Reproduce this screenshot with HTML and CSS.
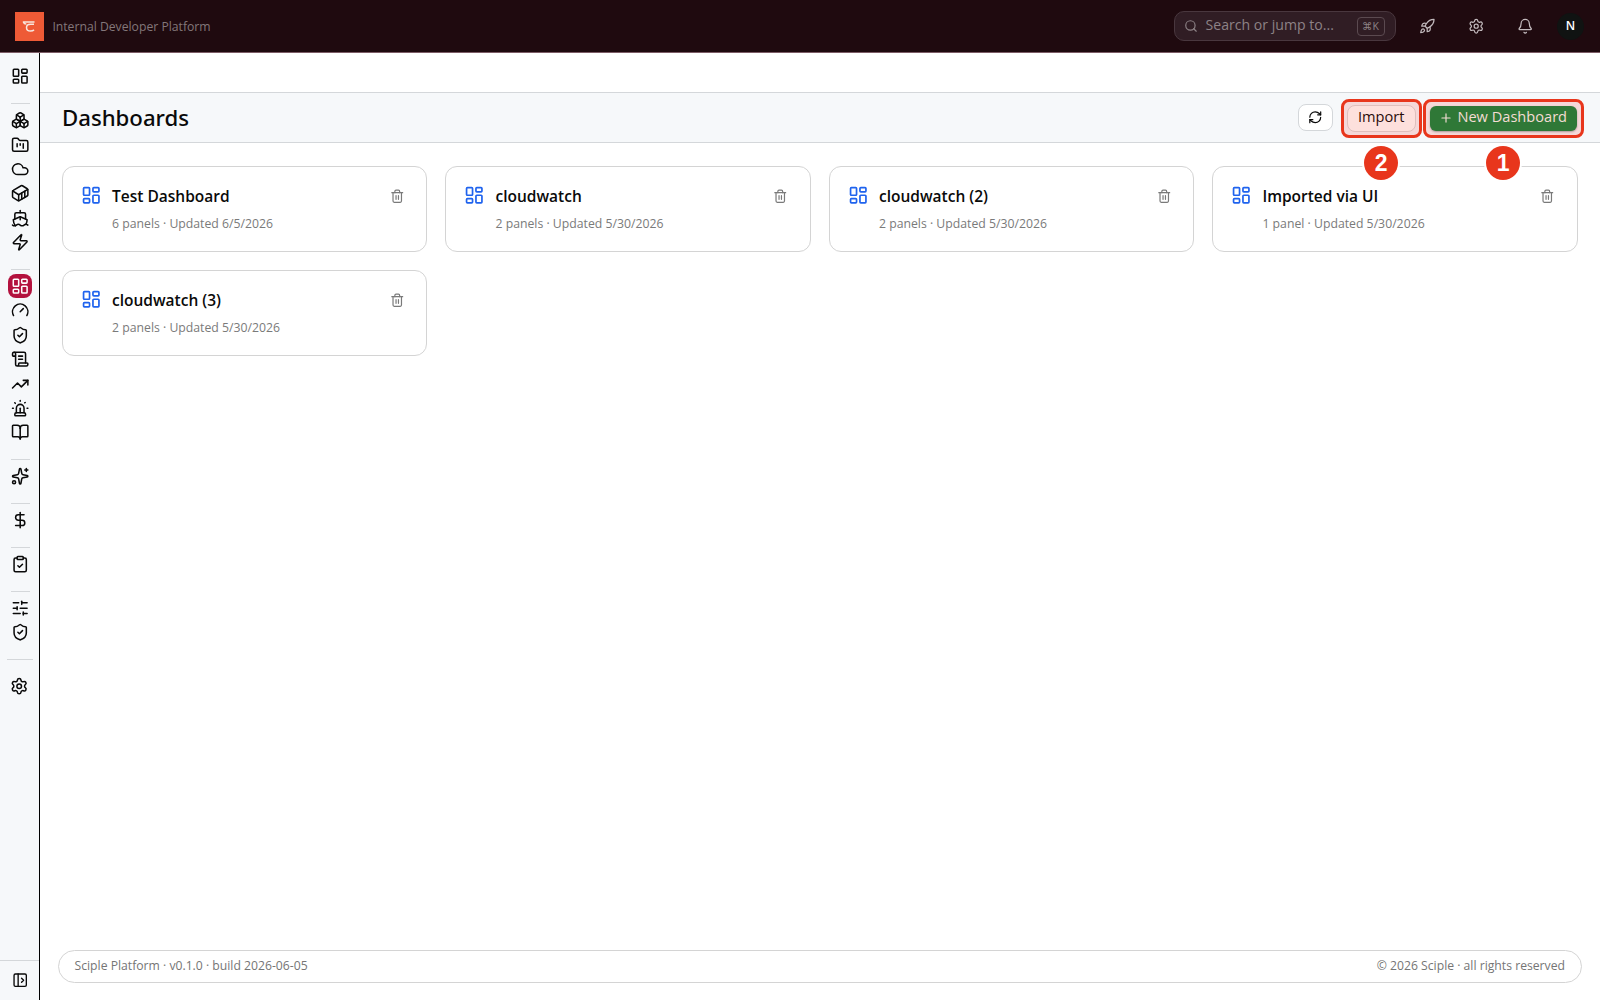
FILE: index.html
```html
<!DOCTYPE html>
<html lang="en">
<head>
  <meta charset="UTF-8" />
  <meta name="viewport" content="width=device-width, initial-scale=1.0"/>
  <title>Dashboards</title>
  <link rel="stylesheet" href="styles.css">
</head>
<body>
  <svg class="sprite" aria-hidden="true">
    <symbol id="dashboard" viewBox="0 0 24 24"><rect x="3" y="3" width="7" height="9" rx="1"/><rect x="14" y="3" width="7" height="5" rx="1"/><rect x="14" y="12" width="7" height="9" rx="1"/><rect x="3" y="16" width="7" height="5" rx="1"/></symbol>
    <symbol id="boxes" viewBox="0 0 24 24"><path d="M2.97 12.92A2 2 0 0 0 2 14.63v3.24a2 2 0 0 0 .97 1.71l3 1.8a2 2 0 0 0 2.06 0L12 19v-5.5l-5-3-4.03 2.42Z"/><path d="m7 16.5-4.74-2.85"/><path d="m7 16.5 5-3"/><path d="M7 16.5v5.17"/><path d="M12 13.5V19l3.97 2.38a2 2 0 0 0 2.06 0l3-1.8a2 2 0 0 0 .97-1.71v-3.24a2 2 0 0 0-.97-1.71L17 10.5l-5 3Z"/><path d="m17 16.5-5-3"/><path d="m17 16.5 4.74-2.85"/><path d="M17 16.5v5.17"/><path d="M7.97 4.42A2 2 0 0 0 7 6.13v4.37l5 3 5-3V6.13a2 2 0 0 0-.97-1.71l-3-1.8a2 2 0 0 0-2.06 0l-3 1.8Z"/><path d="M12 8 7.26 5.15"/><path d="m12 8 4.74-2.85"/><path d="M12 13.5V8"/></symbol>
    <symbol id="folder" viewBox="0 0 24 24"><path d="M4 20h16a2 2 0 0 0 2-2V8a2 2 0 0 0-2-2h-7.93a2 2 0 0 1-1.66-.9l-.82-1.2A2 2 0 0 0 7.93 3H4a2 2 0 0 0-2 2v13c0 1.1.9 2 2 2Z"/><path d="M8 10v4"/><path d="M12 10v2"/><path d="M16 10v6"/></symbol>
    <symbol id="cloud" viewBox="0 0 24 24"><path d="M17.5 19H9a7 7 0 1 1 6.71-9h1.79a4.5 4.5 0 1 1 0 9Z"/></symbol>
    <symbol id="container" viewBox="0 0 24 24"><path d="M22 7.7c0-.6-.4-1.2-.8-1.5l-6.3-3.9a1.72 1.72 0 0 0-1.7 0l-10.3 6c-.5.2-.9.8-.9 1.4v6.6c0 .5.4 1.2.8 1.5l6.3 3.9a1.72 1.72 0 0 0 1.7 0l10.3-6c.5-.3.9-1 .9-1.5Z"/><path d="M10 21.9V14L2.1 9.1"/><path d="m10 14 11.9-6.9"/><path d="M14 19.8v-8.1"/><path d="M18 17.5V9.4"/></symbol>
    <symbol id="ship" viewBox="0 0 24 24"><path d="M12 10.189V14"/><path d="M12 2v3"/><path d="M19 13V7a2 2 0 0 0-2-2H7a2 2 0 0 0-2 2v6"/><path d="M19.38 20A11.6 11.6 0 0 0 21 14l-8.188-3.639a2 2 0 0 0-1.624 0L3 14a11.6 11.6 0 0 0 2.81 7.76"/><path d="M2 21c.6.5 1.2 1 2.5 1 2.5 0 2.5-2 5-2 1.3 0 1.9.5 2.5 1s1.2 1 2.5 1c2.5 0 2.5-2 5-2 1.3 0 1.9.5 2.5 1"/></symbol>
    <symbol id="zap" viewBox="0 0 24 24"><path d="M4 14a1 1 0 0 1-.78-1.63l9.9-10.2a.5.5 0 0 1 .86.46l-1.92 6.02A1 1 0 0 0 13 10h7a1 1 0 0 1 .78 1.63l-9.9 10.2a.5.5 0 0 1-.86-.46l1.92-6.02A1 1 0 0 0 11 14z"/></symbol>
    <symbol id="gauge" viewBox="0 0 24 24"><path d="m12 14 4-4"/><path d="M3.34 19a10 10 0 1 1 17.32 0"/></symbol>
    <symbol id="shield" viewBox="0 0 24 24"><path d="M20 13c0 5-3.5 7.5-7.66 8.95a1 1 0 0 1-.67-.01C7.5 20.5 4 18 4 13V6a1 1 0 0 1 1-1c2 0 4.5-1.2 6.24-2.72a1.17 1.17 0 0 1 1.52 0C14.51 3.81 17 5 19 5a1 1 0 0 1 1 1z"/><path d="m9 12 2 2 4-4"/></symbol>
    <symbol id="scroll" viewBox="0 0 24 24"><path d="M15 12h-5"/><path d="M15 8h-5"/><path d="M19 17V5a2 2 0 0 0-2-2H4"/><path d="M8 21h12a2 2 0 0 0 2-2v-1a1 1 0 0 0-1-1H11a1 1 0 0 0-1 1v1a2 2 0 1 1-4 0V5a2 2 0 1 0-4 0v2a1 1 0 0 0 1 1h3"/></symbol>
    <symbol id="trending" viewBox="0 0 24 24"><path d="M16 7h6v6"/><path d="m22 7-8.5 8.5-5-5L2 17"/></symbol>
    <symbol id="siren" viewBox="0 0 24 24"><path d="M7 18v-6a5 5 0 1 1 10 0v6"/><path d="M5 21a1 1 0 0 0 1 1h12a1 1 0 0 0 1-1v-1a2 2 0 0 0-2-2H7a2 2 0 0 0-2 2z"/><path d="M21 12h1"/><path d="M18.5 4.5 18 5"/><path d="M2 12h1"/><path d="M12 2v1"/><path d="m4.929 4.929.707.707"/><path d="M12 12v6"/></symbol>
    <symbol id="book" viewBox="0 0 24 24"><path d="M12 7v14"/><path d="M3 18a1 1 0 0 1-1-1V4a1 1 0 0 1 1-1h5a4 4 0 0 1 4 4 4 4 0 0 1 4-4h5a1 1 0 0 1 1 1v13a1 1 0 0 1-1 1h-6a3 3 0 0 0-3 3 3 3 0 0 0-3-3z"/></symbol>
    <symbol id="sparkles" viewBox="0 0 24 24"><path d="M11.017 2.814a1 1 0 0 1 1.966 0l1.051 5.558a2 2 0 0 0 1.594 1.594l5.558 1.051a1 1 0 0 1 0 1.966l-5.558 1.051a2 2 0 0 0-1.594 1.594l-1.051 5.558a1 1 0 0 1-1.966 0l-1.051-5.558a2 2 0 0 0-1.594-1.594l-5.558-1.051a1 1 0 0 1 0-1.966l5.558-1.051a2 2 0 0 0 1.594-1.594z"/><path d="M20 2v4"/><path d="M22 4h-4"/><circle cx="4" cy="20" r="2"/></symbol>
    <symbol id="dollar" viewBox="0 0 24 24"><path d="M12 2v20"/><path d="M17 5H9.5a3.5 3.5 0 0 0 0 7h5a3.5 3.5 0 0 1 0 7H6"/></symbol>
    <symbol id="clipboard" viewBox="0 0 24 24"><rect x="8" y="2" width="8" height="4" rx="1"/><path d="M16 4h2a2 2 0 0 1 2 2v14a2 2 0 0 1-2 2H6a2 2 0 0 1-2-2V6a2 2 0 0 1 2-2h2"/><path d="m9 14 2 2 4-4"/></symbol>
    <symbol id="sliders" viewBox="0 0 24 24"><path d="M10 5H3"/><path d="M12 19H3"/><path d="M14 3v4"/><path d="M16 17v4"/><path d="M21 12h-9"/><path d="M21 19h-5"/><path d="M21 5h-7"/><path d="M8 10v4"/><path d="M8 12H3"/></symbol>
    <symbol id="settings" viewBox="0 0 24 24"><path d="M9.671 4.136a2.34 2.34 0 0 1 4.659 0 2.34 2.34 0 0 0 3.319 1.915 2.34 2.34 0 0 1 2.33 4.033 2.34 2.34 0 0 0 0 3.831 2.34 2.34 0 0 1-2.33 4.033 2.34 2.34 0 0 0-3.319 1.915 2.34 2.34 0 0 1-4.659 0 2.34 2.34 0 0 0-3.32-1.915 2.34 2.34 0 0 1-2.33-4.033 2.34 2.34 0 0 0 0-3.831A2.34 2.34 0 0 1 6.35 6.051a2.34 2.34 0 0 0 3.319-1.915"/><circle cx="12" cy="12" r="3"/></symbol>
    <symbol id="panel" viewBox="0 0 24 24"><rect x="3" y="3" width="18" height="18" rx="2"/><path d="M9 3v18"/><path d="m14 9 3 3-3 3"/></symbol>
    <symbol id="rocket" viewBox="0 0 24 24"><path d="M4.5 16.5c-1.5 1.26-2 5-2 5s3.74-.5 5-2c.71-.84.7-2.13-.09-2.91a2.18 2.18 0 0 0-2.91-.09z"/><path d="m12 15-3-3a22 22 0 0 1 2-3.95A12.88 12.88 0 0 1 22 2c0 2.72-.78 7.5-6 11a22.35 22.35 0 0 1-4 2z"/><path d="M9 12H4s.55-3.03 2-4c1.62-1.08 5 0 5 0"/><path d="M12 15v5s3.03-.55 4-2c1.08-1.62 0-5 0-5"/></symbol>
    <symbol id="bell" viewBox="0 0 24 24"><path d="M10.268 21a2 2 0 0 0 3.464 0"/><path d="M3.262 15.326A1 1 0 0 0 4 17h16a1 1 0 0 0 .74-1.673C19.41 13.956 18 12.499 18 8A6 6 0 0 0 6 8c0 4.499-1.411 5.956-2.738 7.326"/></symbol>
    <symbol id="search" viewBox="0 0 24 24"><path d="m21 21-4.34-4.34"/><circle cx="11" cy="11" r="8"/></symbol>
    <symbol id="refresh" viewBox="0 0 24 24"><path d="M3 12a9 9 0 0 1 9-9 9.75 9.75 0 0 1 6.74 2.74L21 8"/><path d="M21 3v5h-5"/><path d="M21 12a9 9 0 0 1-9 9 9.75 9.75 0 0 1-6.74-2.74L3 16"/><path d="M8 16H3v5"/></symbol>
    <symbol id="trash" viewBox="0 0 24 24"><path d="M10 11v6"/><path d="M14 11v6"/><path d="M19 6v14a2 2 0 0 1-2 2H7a2 2 0 0 1-2-2V6"/><path d="M3 6h18"/><path d="M8 6V4a2 2 0 0 1 2-2h4a2 2 0 0 1 2 2v2"/></symbol>
    <symbol id="plus" viewBox="0 0 24 24"><path d="M5 12h14"/><path d="M12 5v14"/></symbol>
  </svg>

  <header class="topbar">
    <div class="logo">
      <svg viewBox="0 0 29 29"><path d="M7.800 9.900h11.700M8.500 10.200c.4 1.500 1.500 1.900 2.800 1.900M19 12.300h-3.500c-2.500 0-4 1-4 3.200 0 2.400 1.500 3.600 4 3.600 1.500 0 2.700-.4 3.500-1.200"/></svg>
    </div>
    <span class="brand">Internal Developer Platform</span>
    <div class="search">
      <svg class="icon"><use href="#search"/></svg>
      <span class="search-text">Search or jump to...</span>
      <kbd>⌘K</kbd>
    </div>
    <nav class="top-actions">
      <a><svg class="icon"><use href="#rocket"/></svg></a>
      <a><svg class="icon"><use href="#settings"/></svg></a>
      <a><svg class="icon"><use href="#bell"/></svg></a>
    </nav>
    <div class="avatar">N</div>
  </header>

  <div class="layout">
    <aside class="sidebar">
      <nav class="side-nav">
        <a><svg class="icon"><use href="#dashboard"/></svg></a>
        <hr>
        <a><svg class="icon"><use href="#boxes"/></svg></a>
        <a><svg class="icon"><use href="#folder"/></svg></a>
        <a><svg class="icon"><use href="#cloud"/></svg></a>
        <a><svg class="icon"><use href="#container"/></svg></a>
        <a><svg class="icon"><use href="#ship"/></svg></a>
        <a><svg class="icon"><use href="#zap"/></svg></a>
        <hr>
        <a class="active"><svg class="icon"><use href="#dashboard"/></svg></a>
        <a><svg class="icon"><use href="#gauge"/></svg></a>
        <a><svg class="icon"><use href="#shield"/></svg></a>
        <a><svg class="icon"><use href="#scroll"/></svg></a>
        <a><svg class="icon"><use href="#trending"/></svg></a>
        <a><svg class="icon"><use href="#siren"/></svg></a>
        <a><svg class="icon"><use href="#book"/></svg></a>
        <hr>
        <a><svg class="icon"><use href="#sparkles"/></svg></a>
        <hr>
        <a><svg class="icon"><use href="#dollar"/></svg></a>
        <hr>
        <a><svg class="icon"><use href="#clipboard"/></svg></a>
        <hr>
        <a><svg class="icon"><use href="#sliders"/></svg></a>
        <a><svg class="icon"><use href="#shield"/></svg></a>
      </nav>
      <div class="side-settings"><svg class="icon"><use href="#settings"/></svg></div>
      <div class="side-toggle"><svg class="icon"><use href="#panel"/></svg></div>
    </aside>

    <main class="content">
      <div class="page-header">
        <h1>Dashboards</h1>
        <button class="btn btn-refresh"><svg class="icon"><use href="#refresh"/></svg></button>
        <div class="callout callout-import">
          <button class="btn btn-import">Import</button>
          <span class="step">2</span>
        </div>
        <div class="callout callout-new">
          <button class="btn btn-new"><svg class="icon"><use href="#plus"/></svg>New Dashboard</button>
          <span class="step">1</span>
        </div>
      </div>

      <div class="cards">
        <div class="card">
          <svg class="icon"><use href="#dashboard"/></svg>
          <div class="text">
            <h2>Test Dashboard</h2>
            <p>6 panels · Updated 6/5/2026</p>
          </div>
          <svg class="icon trash"><use href="#trash"/></svg>
        </div>
        <div class="card">
          <svg class="icon"><use href="#dashboard"/></svg>
          <div class="text">
            <h2>cloudwatch</h2>
            <p>2 panels · Updated 5/30/2026</p>
          </div>
          <svg class="icon trash"><use href="#trash"/></svg>
        </div>
        <div class="card">
          <svg class="icon"><use href="#dashboard"/></svg>
          <div class="text">
            <h2>cloudwatch (2)</h2>
            <p>2 panels · Updated 5/30/2026</p>
          </div>
          <svg class="icon trash"><use href="#trash"/></svg>
        </div>
        <div class="card">
          <svg class="icon"><use href="#dashboard"/></svg>
          <div class="text">
            <h2>Imported via UI</h2>
            <p>1 panel · Updated 5/30/2026</p>
          </div>
          <svg class="icon trash"><use href="#trash"/></svg>
        </div>
        <div class="card">
          <svg class="icon"><use href="#dashboard"/></svg>
          <div class="text">
            <h2>cloudwatch (3)</h2>
            <p>2 panels · Updated 5/30/2026</p>
          </div>
          <svg class="icon trash"><use href="#trash"/></svg>
        </div>
      </div>

      <footer class="footer">
        <span>Sciple Platform · v0.1.0 · build 2026-06-05</span>
        <span>© 2026 Sciple · all rights reserved</span>
      </footer>
    </main>
  </div>
</body>
</html>
```
FILE: styles.css
```css
* {
  box-sizing: border-box;
}
body {
  margin: 0;
  height: 100vh;
  display: flex;
  flex-direction: column;
  overflow: hidden;
  font-family: "Open Sans", "Noto Sans", sans-serif;
  color: #0a0a0a;
  background: #fff;
}
.sprite {
  display: none;
}
.icon {
  width: 18.4px;
  height: 18.4px;
  flex: none;
  fill: none;
  stroke: currentColor;
  stroke-width: 2;
  stroke-linecap: round;
  stroke-linejoin: round;
}

/* top bar */
.topbar {
  height: 53px;
  flex: none;
  display: flex;
  align-items: center;
  padding: 0 16px 0 15.4px;
  background: #1f0a0f;
  border-bottom: 1px solid #7d5d67;
}
.logo {
  width: 29px;
  height: 29px;
  background: #ee5a36;
}
.logo svg {
  display: block;
  fill: none;
  stroke: #f7e6de;
  stroke-width: 1.5;
}
.brand {
  margin-left: 8px;
  font-size: 12.2px;
  color: #83777a;
}
.search {
  margin-left: auto;
  width: 222.5px;
  height: 30px;
  display: flex;
  align-items: center;
  padding: 0 10.5px 0 9px;
  border: 1px solid #49373e;
  border-radius: 10px;
  background: #301d24;
  color: #8d8286;
}
.search .icon {
  width: 14px;
  height: 14px;
}
.search-text {
  flex: 1;
  margin-left: 8px;
  padding-bottom: 3px;
  font-size: 14.1px;
}
.search kbd {
  width: 28px;
  height: 19px;
  border: 1px solid #5b4a50;
  border-radius: 4px;
  font-family: "Open Sans", "DejaVu Sans", sans-serif;
  font-size: 10.5px;
  line-height: 17px;
  text-align: center;
}
.top-actions {
  display: flex;
  color: #c2babd;
  margin: 0 7px 0 7px;
}
.top-actions a {
  width: 49px;
  display: flex;
  justify-content: center;
}
.top-actions .icon {
  width: 16.4px;
  height: 16.4px;
  stroke-width: 1.8;
}
.avatar {
  width: 27px;
  height: 27px;
  border-radius: 50%;
  background: #101312;
  color: #fff;
  font-size: 12px;
  font-weight: 600;
  line-height: 26px;
  text-align: center;
}

.layout {
  flex: 1;
  display: flex;
  min-height: 0;
}

/* sidebar */
.sidebar {
  width: 40px;
  flex: none;
  display: flex;
  flex-direction: column;
  background: #f6f8fa;
  border-right: 1px solid #000;
}
.side-nav {
  display: flex;
  flex-direction: column;
  align-items: center;
  padding: 11.3px 0 14.5px;
  border-bottom: 1px solid #d4d7da;
  margin: 0 6px 0 7px;
}
.side-nav a {
  width: 23.5px;
  height: 24.4px;
  display: flex;
  align-items: center;
  justify-content: center;
}
.side-nav .active {
  border-radius: 8px;
  background: #b3123e;
  color: #fff;
}
.side-nav hr {
  width: 19px;
  height: 1px;
  margin: 14.5px 0 4px;
  border: 0;
  background: #d4d7da;
}
.side-settings {
  display: flex;
  justify-content: center;
  padding-top: 16.5px;
}
.side-toggle {
  margin-top: auto;
  height: 40px;
  padding-left: 1px;
  display: flex;
  align-items: center;
  justify-content: center;
  border-top: 1px solid #d4d7da;
}
.side-toggle .icon {
  width: 16.4px;
  height: 16.4px;
}

/* page */
.content {
  flex: 1;
  display: flex;
  flex-direction: column;
  padding-top: 39px;
}
.page-header {
  height: 51px;
  display: flex;
  align-items: center;
  padding: 0 16.5px 0 22px;
  background: #f6f8fa;
  border-top: 1px solid #d4d7da;
  border-bottom: 1px solid #d4d7da;
}
.page-header h1 {
  margin: 0 auto 0 0;
  padding-bottom: 1px;
  font-family: "Noto Sans", sans-serif;
  font-size: 22.2px;
  font-weight: 500;
}
.btn {
  display: flex;
  align-items: center;
  justify-content: center;
  padding: 0 0 4px;
  font-family: inherit;
  font-size: 14.6px;
  border: 1px solid #d4d7da;
  border-radius: 8px;
  background: #fff;
  color: #0a0a0a;
}
.btn-refresh {
  width: 35px;
  height: 27px;
  padding: 0;
  margin-right: 8px;
}
.btn-refresh .icon {
  width: 14.5px;
  height: 14.5px;
}
.btn-import {
  width: 69px;
  height: 27px;
  background: #fde0dc;
  border-color: #dfbfbc;
  color: #2a0d0a;
}
.btn-new {
  width: 147px;
  height: 25px;
  gap: 4px;
  border: 0;
  border-radius: 6px;
  background: #2f7837;
  color: #f4dcd4;
  box-shadow: 0 1px 2px rgba(0,0,0,0.3);
}
.btn-new .icon {
  width: 14px;
  height: 14px;
  margin-top: 3px;
}

/* numbered callouts */
.callout {
  position: relative;
  height: 39px;
  display: flex;
  align-items: center;
  justify-content: center;
  margin-top: 1px;
  border: 3px solid #e8361c;
  border-radius: 8px;
  background: #f5d8d8;
}
.callout-import {
  width: 80.5px;
  margin-right: 1.5px;
}
.callout-new {
  width: 160.5px;
}
.step {
  position: absolute;
  top: 44px;
  left: 50%;
  width: 34px;
  height: 34px;
  margin-left: -17px;
  border-radius: 50%;
  background: #e8361c;
  box-shadow: 0 0 0 2px #fff;
  color: #fff;
  font-family: "Liberation Sans", Arial, sans-serif;
  font-size: 23px;
  font-weight: bold;
  line-height: 34px;
  text-align: center;
}

.cards {
  display: grid;
  grid-template-columns: repeat(4, 1fr);
  gap: 18.3px;
  padding: 23px 22.4px 0 22px;
}
.card {
  height: 86px;
  display: flex;
  align-items: flex-start;
  padding: 18px 22px 0 18px;
  border: 1px solid #d4d4d4;
  border-radius: 12px;
}
.card .icon {
  width: 20.5px;
  height: 20.5px;
  color: #1f63ee;
}
.card .text {
  flex: 1;
  margin-left: 10.5px;
}
.card h2 {
  margin: 0;
  font-size: 15.5px;
  font-weight: 600;
  line-height: 23px;
}
.card p {
  margin: 7px 0 0;
  font-size: 12.25px;
  line-height: 18px;
  color: #7a7a7a;
}
.card .trash {
  width: 14.5px;
  height: 14.5px;
  margin-top: 4px;
  color: #7a7a7a;
}

.footer {
  display: flex;
  align-items: center;
  justify-content: space-between;
  height: 32.5px;
  margin: auto 18px 17.5px;
  padding: 0 16px 2px 15.5px;
  border: 1px solid #d4d4d4;
  border-radius: 17px;
  font-size: 12.2px;
  color: #757575;
}
```
